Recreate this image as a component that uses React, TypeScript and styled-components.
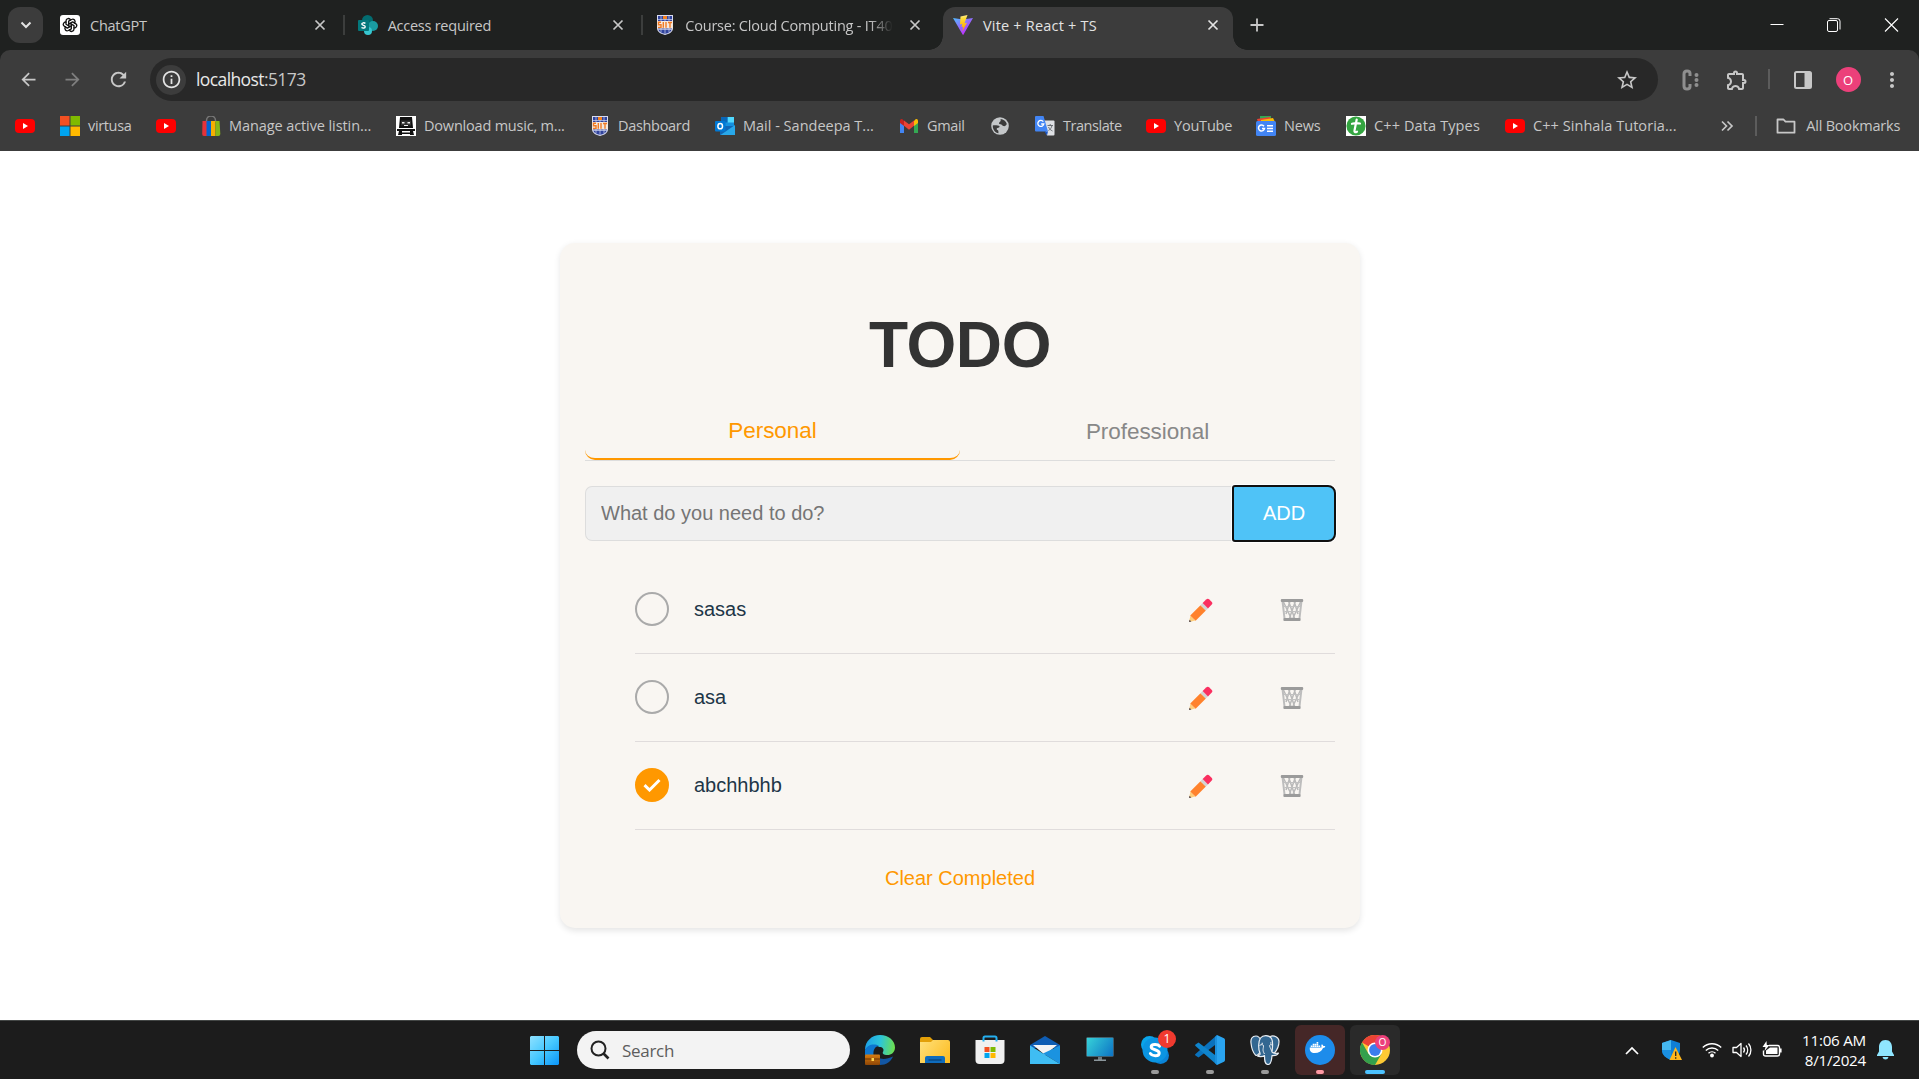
import React from "react";
import styled, { createGlobalStyle, css } from "styled-components";
import { MdArrowBack, MdArrowForward, MdRefresh, MdStarOutline, MdOutlineExtension, MdMoreVert, MdInfoOutline } from "react-icons/md";
import { TbBrandOpenai } from "react-icons/tb";
import { FaDocker } from "react-icons/fa";

const GlobalStyle = createGlobalStyle`
  *, *::before, *::after { box-sizing: border-box; }
  body { margin: 0; background: #fff; }
  svg { display: block; flex: none; }
  button, input { font: inherit; margin: 0; }
`;

const uiFont = css`font-family: "Open Sans", "Noto Sans", sans-serif;`;

/* ---------- window ---------- */

const Window = styled.div`
  width: 1919px;
  height: 1079px;
  display: flex;
  flex-direction: column;
  overflow: hidden;
`;

const Chrome = styled.header`
  ${uiFont}
  flex: none;
  background: #1f2120;
  color: #c7c7c7;
`;

const TabStrip = styled.div`
  height: 50px;
  display: flex;
  padding: 7px 0 0 8px;
`;

const TabSearch = styled.button`
  width: 35px;
  height: 36px;
  margin-right: 7px;
  padding: 0;
  border: 0;
  border-radius: 12px;
  background: #3c3c3c;
  display: grid;
  place-items: center;
`;

const TabItem = styled.div<{ $active?: boolean }>`
  position: relative;
  flex: 0 0 290px;
  height: 43px;
  margin-right: 7.67px;
  padding: 0 14px 7px 10px;
  display: flex;
  align-items: center;
  gap: 10px;
  border-radius: 12px 12px 0 0;
  color: ${(p) => (p.$active ? "#e3e3e3" : "#c7c7c7")};
  background: ${(p) => (p.$active ? "#3c3c3c" : "transparent")};
  ${(p) =>
    p.$active &&
    css`
      &::before,
      &::after {
        content: "";
        position: absolute;
        bottom: 0;
        width: 14px;
        height: 14px;
      }
      &::before {
        left: -14px;
        background: radial-gradient(circle at 0 0, transparent 13.5px, #3c3c3c 14px);
      }
      &::after {
        right: -14px;
        background: radial-gradient(circle at 100% 0, transparent 13.5px, #3c3c3c 14px);
      }
    `}
`;

const TabDivider = styled.i`
  position: absolute;
  right: -5px;
  top: 8px;
  width: 2px;
  height: 20px;
  background: #3c3e3d;
`;

const TabTitle = styled.span<{ $ls: number; $fade?: boolean }>`
  width: 210px;
  font-size: 14.5px;
  letter-spacing: ${(p) => p.$ls}px;
  white-space: nowrap;
  ${(p) => p.$fade && css`mask-image: linear-gradient(90deg, #000 88%, transparent 99%);`}
`;

const TabClose = styled.span`
  margin-left: auto;
  width: 12px;
`;

const NewTab = styled.div`
  width: 33px;
  height: 36px;
  display: grid;
  place-items: center;
`;

const WindowControls = styled.div`
  margin-left: auto;
  height: 36px;
  display: flex;
  align-items: center;
  > svg { width: 57px; }
`;

const Toolbar = styled.div`
  height: 51px;
  padding: 8px 0 0 15px;
  display: flex;
  align-items: flex-start;
  background: #3c3c3c;
  border-radius: 10px 10px 0 0;
`;

const NavButton = styled.div<{ $w: number; $dim?: boolean }>`
  flex: 0 0 ${(p) => p.$w}px;
  height: 43px;
  display: flex;
  align-items: center;
  justify-content: center;
  color: ${(p) => (p.$dim ? "#7f7f7f" : "#c7c7c7")};
`;

const Omnibox = styled.div`
  flex: 0 0 1508px;
  height: 43px;
  padding: 0 19px 0 6px;
  display: flex;
  align-items: center;
  border-radius: 22px;
  background: #282828;
  font-size: 17.5px;
  color: #c7c7c7;
  > svg { margin-left: auto; }
`;

const SiteInfo = styled.span`
  width: 30px;
  height: 30px;
  margin-right: 10px;
  border-radius: 50%;
  background: #3c3c3c;
  color: #e3e3e3;
  display: grid;
  place-items: center;
`;

const Url = styled.span`
  letter-spacing: -0.6px;
  padding-bottom: 1px;
  b { font-weight: 400; color: #e8e8e8; }
`;

const Rule = styled.i<{ $m: string }>`
  flex: none;
  width: 2px;
  height: 20px;
  margin: ${(p) => p.$m};
  background: #5c5c5c;
`;

const Avatar = styled.span`
  width: 25px;
  height: 25px;
  border-radius: 50%;
  background: #ec407a;
  color: #fff;
  font-size: 13px;
  display: grid;
  place-items: center;
`;

const BookmarkBar = styled.nav`
  height: 50px;
  padding-left: 15px;
  display: flex;
  align-items: center;
  background: #3c3c3c;
`;

const Bookmark = styled.a<{ $w: number; $ls?: number }>`
  flex: 0 0 ${(p) => p.$w}px;
  display: flex;
  align-items: center;
  gap: 8px;
  font-size: 14.5px;
  letter-spacing: ${(p) => p.$ls ?? -0.2}px;
  white-space: nowrap;
`;

const BookmarkLabel = styled.span`padding-bottom: 2px;`;

/* ---------- page ---------- */

const Page = styled.main`
  height: 869px;
  flex: none;
  background: #fff;
  display: flex;
  justify-content: center;
  align-items: flex-start;
  padding: 92px 0 0 1px;
  font-family: "Liberation Sans", Arial, sans-serif;
  font-size: 20px;
  color: #213547;
`;

const Card = styled.section`
  width: 800px;
  height: 685px;
  padding: 66px 25px 0;
  border-radius: 15px;
  background: #f9f6f2;
  box-shadow: 0 2.5px 6px rgba(0, 0, 0, 0.1);
`;

const Title = styled.h1`
  margin: 0;
  font-size: 64px;
  line-height: 72px;
  letter-spacing: -0.4px;
  text-align: center;
  color: #333;
`;

const Tabs = styled.div`
  height: 60px;
  margin-top: 20px;
  display: flex;
  align-items: stretch;
  border-bottom: 1px solid #ddd;
`;

const CategoryTab = styled.button<{ $active?: boolean }>`
  flex: 1;
  padding: ${(p) => (p.$active ? 2 : 3)}px 0 0;
  border: 0;
  border-bottom: ${(p) => (p.$active ? "2px solid #ff9800" : "0")};
  border-radius: 10px;
  background: transparent;
  font-size: 22.5px;
  letter-spacing: -0.05px;
  color: ${(p) => (p.$active ? "#ff9800" : "#888")};
`;

const AddForm = styled.div`
  display: flex;
  margin-top: 25px;
`;

const TaskInput = styled.input`
  flex: 1;
  min-width: 0;
  height: 55px;
  padding: 0 15px;
  border: 1px solid #ddd;
  border-right: 0;
  border-radius: 7px 0 0 7px;
  background: #f0f0f0;
  outline: 0;
  &::placeholder { color: #757575; opacity: 1; }
`;

const AddButton = styled.button`
  width: 104px;
  height: 57px;
  margin: -1px -1px -1px 0;
  padding: 0;
  border: 2px solid #101010;
  border-radius: 3px 8px 8px 3px;
  background: #4fc3f7;
  box-shadow: 0 0 0 1px #fff;
  color: #fff;
`;

const TaskList = styled.ul`
  list-style: none;
  margin: 25px 0 0;
  padding: 0 0 0 50px;
`;

const TaskRow = styled.li`
  height: 88px;
  padding: 0 31px 1px 0;
  display: flex;
  align-items: center;
  border-bottom: 1px solid #e0dcdc;
`;

const Check = styled.span<{ $done: boolean }>`
  width: 34px;
  height: 34px;
  margin-right: 25px;
  border: 2px solid ${(p) => (p.$done ? "#ff9800" : "#aaa")};
  border-radius: 50%;
  background: ${(p) => (p.$done ? "#ff9800" : "transparent")};
  display: grid;
  place-items: center;
`;

const TaskName = styled.span`flex: 1;`;

const Actions = styled.span`
  display: flex;
  gap: 67px;
  padding-top: 4px;
`;

const ClearButton = styled.button`
  display: block;
  margin: 36px auto 0;
  padding: 0;
  border: 0;
  background: none;
  line-height: 24px;
  color: #ff9800;
`;

/* ---------- taskbar ---------- */

const Taskbar = styled.footer`
  ${uiFont}
  flex: 1;
  display: flex;
  align-items: center;
  padding-left: 519px;
  border-top: 1px solid #434645;
  background: #1c1c1c;
`;

const AppSlot = styled.span<{ $tint?: string }>`
  position: relative;
  width: 50px;
  height: 50px;
  margin-right: 5px;
  border-radius: 6px;
  background: ${(p) => p.$tint ?? "transparent"};
  display: grid;
  place-items: center;
`;

const Indicator = styled.i<{ $w: number; $c: string }>`
  position: absolute;
  bottom: 1px;
  left: calc(50% - ${(p) => p.$w / 2}px);
  width: ${(p) => p.$w}px;
  height: 4px;
  border-radius: 2px;
  background: ${(p) => p.$c};
`;

const Badge = styled.i<{ $s: number; $c: string; $top: number; $right: number }>`
  position: absolute;
  top: ${(p) => p.$top}px;
  right: ${(p) => p.$right}px;
  width: ${(p) => p.$s}px;
  height: ${(p) => p.$s}px;
  border-radius: 50%;
  background: ${(p) => p.$c};
  color: #fff;
  font-style: normal;
  font-size: ${(p) => p.$s * 0.68}px;
  line-height: 1;
  display: grid;
  place-items: center;
`;

const SearchBox = styled.div`
  width: 273px;
  height: 38px;
  margin: 0 5px 0 3px;
  padding-left: 13px;
  display: flex;
  align-items: center;
  gap: 12px;
  border-radius: 19px;
  background: #f3f3f3;
  font-size: 17px;
  letter-spacing: -0.3px;
  color: #5d5d5d;
`;

const Tray = styled.div`
  margin: 0 25px 0 auto;
  display: flex;
  align-items: center;
`;

const TrayIcon = styled.span<{ $w: number }>`
  width: ${(p) => p.$w}px;
  display: grid;
  place-items: center;
`;

const Clock = styled.div`
  width: 74px;
  margin-right: 11px;
  font-size: 15.2px;
  line-height: 20px;
  letter-spacing: -0.25px;
  text-align: right;
  color: #fff;
`;

/* ---------- icons ---------- */

type G = { children: React.ReactNode; w?: number; h?: number; box?: string };
const Svg = ({ children, w = 20, h = 20, box = "0 0 20 20" }: G) => (
  <svg width={w} height={h} viewBox={box} fill="none">{children}</svg>
);

const Cross = () => (
  <Svg w={12} h={12} box="0 0 12 12"><path d="M1.5 1.5l9 9m0-9l-9 9" stroke="currentColor" strokeWidth="1.7" /></Svg>
);

const YouTube = () => (
  <Svg><rect y="3" width="20" height="14" rx="4" fill="#f00" /><path d="M8 7l5 3-5 3z" fill="#fff" /></Svg>
);

const OpenAI = () => (
  <Svg>
    <rect width="20" height="20" rx="3" fill="#fff" />
    <g color="#111"><TbBrandOpenai x="2" y="2" width="16" height="16" /></g>
  </Svg>
);

const SharePoint = () => (
  <Svg>
    <circle cx="9.5" cy="5.5" r="5.5" fill="#036c70" />
    <circle cx="15" cy="11" r="5" fill="#1a9ba1" />
    <circle cx="10" cy="16" r="4" fill="#37c6d0" />
    <rect y="5" width="11" height="11" rx="1" fill="#03787c" />
    <path d="M7.4 8.3C6.2 7.5 3.8 7.6 3.8 9.1s3.4 1 3.4 2.6-2.4 1.7-3.7.8" stroke="#fff" strokeWidth="1.4" />
  </Svg>
);

const Crest = () => (
  <Svg>
    <path d="M2 0h16v13c0 4-4 6-8 7-4-1-8-3-8-7z" fill="#d9dcf0" />
    <path d="M3 1h14v12c0 3.500-3.500 5-7 6-3.500-1-7-2.500-7-6z" fill="#30439c" />
    <path d="M3 4.500h14M3 14.500h14M6 1v16M10 1v18M14 1v16" stroke="#cfd5ef" strokeWidth=".7" />
    <rect x="2" y="6" width="16" height="7.500" fill="#f4e9df" />
    <path d="M6 7.200H3.500v2.500H6V12.400H3M8.300 7v5.700M11 7v5.700M13 7.500h4M15 7.500v5.200" stroke="#f07a22" strokeWidth="1.400" />
    <rect x="8" y="1" width="4" height="3" fill="#f5821f" />
  </Svg>
);

const Vite = () => (
  <Svg>
    <defs>
      <linearGradient id="viteA" x1="0" y1="0" x2="12" y2="18" gradientUnits="userSpaceOnUse"><stop stopColor="#41d1ff" /><stop offset="1" stopColor="#bd34fe" /></linearGradient>
      <linearGradient id="viteB" x1="9" y1="1" x2="11" y2="14" gradientUnits="userSpaceOnUse"><stop stopColor="#ffea83" /><stop offset=".2" stopColor="#ffdd35" /><stop offset="1" stopColor="#ffa800" /></linearGradient>
    </defs>
    <path d="M20 2.900L10.500 19.600a.5.5 0 01-.9 0L0 2.900l10 1.700z" fill="url(#viteA)" />
    <path d="M14.500 0L7.500 1.400 7 9.500l2.200-.4-.6 3 1.600-.4-.9 4.800 4.700-8.700-2.500.5z" fill="url(#viteB)" />
  </Svg>
);

const MsTiles = () => (
  <Svg><path d="M0 0h9.500v9.500H0z" fill="#f25022" /><path d="M10.500 0H20v9.500h-9.500z" fill="#7fba00" /><path d="M0 10.500h9.500V20H0z" fill="#00a4ef" /><path d="M10.500 10.500H20V20h-9.500z" fill="#ffb900" /></Svg>
);

const Bag = () => (
  <Svg>
    <path d="M5.500 6V4.500a4.500 4.500 0 019 0V6" stroke="#777" strokeWidth="1.500" />
    <path d="M1.500 5H6v15H3q-2 0-1.800-2z" fill="#e53238" /><path d="M5.500 5H10v15H5.500z" fill="#0064d2" />
    <path d="M10 5h4.500v15H10z" fill="#f5af02" /><path d="M14.500 5h4l.8 13q0 2-2 2h-2.800z" fill="#86b817" />
  </Svg>
);

const Robot = () => (
  <Svg>
    <path d="M0 0h20v20H0z" fill="#fff" />
    <path d="M4 1h12l1 11H3z" fill="#111" /><path d="M5 4.500h10v5H5z" fill="#333" />
    <path d="M6 6h2.500v1.500H6zM11.500 6H14v1.500h-2.500zM8 9h4v1H8z" fill="#eee" />
    <path d="M1 13h18v2H1zM3 15h3v4H2zM14 15h3l1 4h-4zM6 16.500h8V18H6z" fill="#111" />
  </Svg>
);

const Outlook = () => (
  <Svg>
    <path d="M6 1h13v11H6z" fill="#1490df" /><path d="M12.500 1H19v5.500h-6.500z" fill="#50d9ff" /><path d="M6 1h6.500v5.500H6z" fill="#0a67b7" />
    <path d="M5 10l15-0v9H5z" fill="#1066b5" /><path d="M20 9v10H5.500z" fill="#28a8ea" />
    <rect y="5" width="10.500" height="10.500" rx="1" fill="#0078d4" /><ellipse cx="5.200" cy="10.200" rx="2.300" ry="2.600" stroke="#fff" strokeWidth="1.500" />
  </Svg>
);

const Gmail = () => (
  <Svg>
    <path d="M1 5v12h4V9z" fill="#4285f4" /><path d="M19 5v12h-4V9z" fill="#34a853" />
    <path d="M15 5v5l4-3V5q0-2.500-2.500-1.700z" fill="#fbbc04" /><path d="M5 5v5L1 7V5q0-2.500 2.500-1.700z" fill="#c5221f" />
    <path d="M5 4.500l5 3.800 5-3.800v5.300l-5 3.900-5-3.900z" fill="#ea4335" />
  </Svg>
);

const Globe = () => (
  <Svg>
    <circle cx="10" cy="10" r="8.800" fill="#c4c7c9" />
    <path d="M2.800 9.500c1.500-.5 3.200 0 5 0 2 0 2.200 1.300 1.200 2-.8.600-2.300.2-2.300 1.500 0 1.200 1.500.8 1.700 2 .1.800-.2 1.400.1 2.200C5.300 16.800 2.500 13.500 2.800 9.500zM10.500 3c3 .2 5.500 2 6.300 5-.5 1.500-2 2.500-3.500 2-1.500-.4-1.200-1.700-2.800-1.800-1.700-.2-2-1.500-.8-2.300 1-.6 1.300-1.400.8-2.900z" fill="#3c3c3c" />
  </Svg>
);

const Translate = () => (
  <Svg>
    <path d="M7 4.500h11.500q1 0 1 1v13q0 1-1 1H12z" fill="#dfe1e5" />
    <path d="M1 0h7.500l4.500 15.500H1q-1 0-1-1V1q0-1 1-1z" fill="#4285f4" /><path d="M9.500 15.500h3.500L12 19.500z" fill="#1a55c4" />
    <path d="M8.300 5.700A3 3 0 108.800 8H6.200" stroke="#fff" strokeWidth="1.300" />
    <path d="M12.500 9.500H18M15.200 8v1.500M17 9.500c-.5 2.500-2 4-3.500 5M13.500 11c1 2 2 3 4 4" stroke="#6b7075" strokeWidth="1" />
  </Svg>
);

const News = () => (
  <Svg>
    <path d="M4 0h11v6H4z" fill="#34a853" /><path d="M1 3l13-2 2 5H2z" fill="#ea4335" /><path d="M5 4l12-2 2 4H5z" fill="#fbbc04" />
    <rect y="5" width="20" height="15" rx="1.500" fill="#4285f4" />
    <path d="M8 10.300A3 3 0 108.500 12.500H6M11 9.800h6M11 12.500h6M11 15.200h6" stroke="#fff" strokeWidth="1.500" />
  </Svg>
);

const Tutorials = () => (
  <Svg>
    <path d="M0 0h20v20H0z" fill="#fff" /><ellipse cx="10" cy="10" rx="9.600" ry="9.400" fill="#34a541" />
    <path d="M10.700 3.500L8.500 14.500q-.5 2.500 2.500 1.200M6 7.800q4-1 8-.3" stroke="#fff" strokeWidth="2.200" strokeLinecap="round" />
  </Svg>
);

const Folder = () => (
  <Svg><path d="M1.500 3.500h6l2 2.200h9v11h-17z" stroke="#c7c7c7" strokeWidth="1.800" strokeLinejoin="round" /></Svg>
);

const Pencil = () => (
  <Svg w={26} h={26} box="0 0 26 26">
    <g transform="rotate(-45 13 13)">
      <path d="M-2.500 13L3 9.500v7z" fill="#ffce7c" /><path d="M-2.500 13l2-1.300v2.600z" fill="#433b4b" />
      <path d="M3 9.200h14.500v7.600H3z" fill="#ff822d" /><path d="M17.500 9.200h3v7.600h-3z" fill="#d3d3d3" />
      <path d="M20.500 9.200h5q2.300 0 2.300 2.200v3.200q0 2.200-2.300 2.200h-5z" fill="#fa2f60" />
    </g>
  </Svg>
);

const Trash = () => (
  <Svg w={24} h={24} box="0 0 24 24">
    <path d="M2.500 3l2.200 19h14.600L21.500 3" stroke="#bdbdbd" strokeWidth="2" />
    <path d="M3 3l8 17M8.500 3l6 17M14 3l4 13M21 3l-8 17M15.500 3l-6 17M10 3L6 16" stroke="#b8b8b8" strokeWidth="1.500" />
    <path d="M4 8.500h16M4.500 13.500h15" stroke="#c0c0c0" strokeWidth="1.200" />
    <rect x=".8" y="1" width="22.400" height="3" rx="1" fill="#9b9b9b" /><rect x="3.500" y="20" width="17" height="3" rx="1" fill="#9b9b9b" />
  </Svg>
);

const Start = () => (
  <Svg w={29} h={29} box="0 0 29 29">
    <defs><linearGradient id="start" x1="0" y1="0" x2="29" y2="29" gradientUnits="userSpaceOnUse"><stop stopColor="#8fe1ff" /><stop offset=".5" stopColor="#46c8ff" /><stop offset="1" stopColor="#0a94f8" /></linearGradient></defs>
    <path d="M1 0h13v14H0V1zM15 0h13l1 1v13H15zM0 15h14v14H1l-1-1zM15 15h14v13l-1 1H15z" fill="url(#start)" />
  </Svg>
);

const Edge = () => (
  <Svg w={30} h={30} box="0 0 30 30">
    <defs>
      <linearGradient id="edgeA" x1="0" y1="8" x2="30" y2="12" gradientUnits="userSpaceOnUse"><stop stopColor="#1ca0e8" /><stop offset=".5" stopColor="#2dc5d8" /><stop offset="1" stopColor="#6fe04a" /></linearGradient>
      <linearGradient id="edgeB" x1="0" y1="20" x2="0" y2="30" gradientUnits="userSpaceOnUse"><stop stopColor="#d47a10" /><stop offset="1" stopColor="#8e4606" /></linearGradient>
    </defs>
    <path d="M0 15C0 6 7 0 15 0c9 0 15 6 15 12.500 0 5-4 7.500-7.500 7.500-4 0-5.500-1.500-4.500-3 1.500-3-.5-5-3.500-5C8 9 3 11 0 15z" fill="url(#edgeA)" />
    <path d="M0 15c2-5 9-7 14-4-4 0-6 4-5.500 9H0z" fill="#0d76cf" />
    <path d="M10 18c1 6 9 8 18 3.500-2 5-7 8.500-13 8.500z" fill="#1256a3" />
    <rect y="19.500" width="15" height="10.500" rx="1" fill="url(#edgeB)" /><path d="M0 24h15" stroke="#6d3503" /><rect x="6.500" y="23" width="2.500" height="3" fill="#ffd34a" />
  </Svg>
);

const Explorer = () => (
  <Svg w={30} h={30} box="0 0 30 30">
    <defs><linearGradient id="exp" x1="0" y1="6" x2="30" y2="28" gradientUnits="userSpaceOnUse"><stop stopColor="#ffe07a" /><stop offset="1" stopColor="#fdbb1e" /></linearGradient></defs>
    <path d="M0 4q0-2 2-2h8l3 3v5H0z" fill="#e3a008" /><path d="M0 7h11l2-2h15q2 0 2 2v21H0z" fill="url(#exp)" />
    <path d="M5 28v-5q0-2 2-2h16q2 0 2 2v5z" fill="#0f6cbd" /><path d="M8.500 25h13" stroke="#0a4a86" strokeWidth="1.500" />
  </Svg>
);

const Store = () => (
  <Svg w={30} h={30} box="0 0 30 30">
    <path d="M.5 5h29v20q0 4-4 4h-21q-4 0-4-4z" fill="#f0f0f0" />
    <path d="M8.500 6.500V3q0-1.500 1.500-1.500h10Q21.500 1.500 21.500 3v3.500" stroke="#25b0f0" strokeWidth="2" />
    <path d="M9.500 12h5v5h-5z" fill="#f25022" /><path d="M15.500 12h5v5h-5z" fill="#7fba00" /><path d="M9.500 18h5v5h-5z" fill="#00a4ef" /><path d="M15.500 18h5v5h-5z" fill="#ffb900" />
  </Svg>
);

const Mail = () => (
  <Svg w={30} h={30} box="0 0 30 30">
    <path d="M0 10L15 1l15 9v3H0z" fill="#0f5db3" /><path d="M3 10h24L15 20z" fill="#f4f4f4" />
    <path d="M30 10.500V29L13 18.500z" fill="#1b93e0" /><path d="M0 10.500L30 29H0z" fill="#3fbdf3" />
  </Svg>
);

const Monitor = () => (
  <Svg w={28} h={26} box="0 0 28 26">
    <defs><linearGradient id="mon" x1="0" y1="0" x2="28" y2="20" gradientUnits="userSpaceOnUse"><stop stopColor="#38d6d9" /><stop offset="1" stopColor="#0b6fc4" /></linearGradient></defs>
    <rect x=".5" y=".5" width="27" height="19" rx="1" fill="url(#mon)" stroke="#52616a" strokeWidth=".7" /><path d="M12 20h4v3h-4z" fill="#6e7a80" /><path d="M8 22.500h12V24H8z" fill="#8b969b" />
  </Svg>
);

const Skype = () => (
  <Svg w={30} h={30} box="0 0 30 30">
    <circle cx="9.500" cy="9.500" r="8.500" fill="#0aa5ea" /><circle cx="20.500" cy="20.500" r="8.500" fill="#0a84d8" /><circle cx="15" cy="15" r="12.500" fill="#0b95e2" />
    <path d="M19.500 11.200C18 9 11.200 8.700 11.200 12s8 2.200 8 5.900-6.800 3.400-8.800.6" stroke="#fff" strokeWidth="3" strokeLinecap="round" />
  </Svg>
);

const VSCode = () => (
  <Svg w={30} h={30} box="0 0 30 30">
    <path d="M22 0v8.500L3.500 22.500 0.500 20.500q-.8-.8 0-1.500z" fill="#0a72bd" />
    <path d="M22 30v-8.500L3.500 7.500.5 9.500q-.8.800 0 1.500z" fill="#0f84cc" />
    <path d="M22 0l7 3.300q1 .5 1 1.700v20q0 1.200-1 1.700L22 30z" fill="#2aa4f0" /><path d="M22 0L20 2v26l2 2z" fill="#1b90dd" />
  </Svg>
);

const Postgres = () => (
  <Svg w={30} h={30} box="0 0 30 30">
    <g fill="#336791" stroke="#e8edf2" strokeWidth="1.200" strokeLinejoin="round">
      <path d="M6 1C2 1 .5 4 1 8c.5 5 2.500 10 4.500 12 1.500 1.300 2.800-.5 4.500-2.500l1-12C9.500 2 8 1 6 1z" />
      <path d="M20 1.500c4-1.500 9 .5 9 5 0 4-2 8.500-4.500 11.500l-5-1z" />
      <path d="M10.500 3C13-.2 19-.2 21.500 3.500c2 3.500 1 9 .5 13.500 1 1.500 4 1.500 6.500 1-1 2-4 2.700-6.500 2.500-.3 4-.5 9-4 9-3.500 0-3.500-4.500-3.500-9-2 1.500-5.500 1.500-7 .5 2.500-.8 3-1.500 2.300-3.500C8 13.500 8.500 6 10.500 3z" />
    </g>
    <path d="M9.500 10.500c2-1.500 4-1 4 .5 0 2.500-1.500 4 1 8M22 10c-1.500-.8-2.500-.3-2.300 1 .2 2 2 3.500 1.800 5.500M11.500 8.300h1.500M20 8h1.500" stroke="#e8edf2" strokeWidth="1" />
  </Svg>
);

const Docker = () => (
  <Svg w={30} h={30} box="0 0 30 30"><circle cx="15" cy="15" r="15" fill="#1d8ceb" /><g color="#fff"><FaDocker x="4.500" y="4.500" width="23" height="20" /></g></Svg>
);

const ChromeLogo = () => (
  <Svg w={30} h={30} box="0 0 30 30">
    <circle cx="15" cy="15" r="15" fill="#fcc934" />
    <path d="M15 15L2 7.500A15 15 0 0128 7.500z" fill="#ea4335" /><path d="M15 7.500h13" stroke="#ea4335" />
    <path d="M2 7.500L8.500 18.700 15 15l6.500 3.700L15 30A15 15 0 012 7.500z" fill="#34a04c" />
    <circle cx="15" cy="15" r="7.500" fill="#fff" /><circle cx="15" cy="15" r="5.900" fill="#3b7ded" />
  </Svg>
);

const Shield = () => (
  <Svg w={20} h={21} box="0 0 20 21">
    <path d="M9 0l9 3v7c0 5-4 8-9 10-5-2-9-5-9-10V3z" fill="#0f7fd6" /><path d="M9 0v10H0V3z" fill="#45b8f0" /><path d="M9 10v10c-5-2-9-5-9-10z" fill="#1a8fe0" />
    <path d="M13.500 7L20 20H7.500z" fill="#ffb61a" /><path d="M13.700 11.500v4.500M13.700 17.200v1.500" stroke="#222" strokeWidth="1.300" />
  </Svg>
);

const Wifi = () => (
  <Svg w={20} h={18} box="0 0 20 18">
    <path d="M.8 6.500a13 13 0 0118.400 0M3.800 9.500a8.800 8.800 0 0112.400 0M6.500 12.300a5 5 0 017 0" stroke="#fff" strokeWidth="1.400" /><circle cx="10" cy="14.500" r="1.900" fill="#fff" />
  </Svg>
);

const Speaker = () => (
  <Svg w={20} h={18} box="0 0 20 18">
    <path d="M1 6.500h3.500L9 2.500v13L4.500 11.500H1z" stroke="#fff" strokeWidth="1.300" strokeLinejoin="round" /><path d="M11.500 6.500a4 4 0 010 5M14 4.500a7 7 0 010 9M16.500 2.500a10 10 0 010 13" stroke="#fff" strokeWidth="1.300" />
  </Svg>
);

const Battery = () => (
  <Svg w={20} h={18} box="0 0 20 18">
    <path d="M7 4.500h8.500q2 0 2 2v6.500q0 2-2 2h-12q-2 0-2-2V9.500" stroke="#fff" strokeWidth="1.400" /><path d="M18.800 7.500v4" stroke="#fff" strokeWidth="1.600" />
    <path d="M8 6.500h7.500V13H4v-3.500z" fill="#fff" /><path d="M4.500 0L.5 6h3L2.500 10l5-6H4.800z" fill="#fff" />
  </Svg>
);

const Bell = () => (
  <Svg w={17} h={20} box="0 0 17 20">
    <path d="M8.500 0C4 0 2 3.500 2 7v4.500L0 15v1h17v-1l-2-3.500V7c0-3.500-2-7-6.500-7z" fill="#8fe6ff" /><path d="M5.500 17h6q-.6 2.500-3 2.500t-3-2.500z" fill="#8fe6ff" />
  </Svg>
);

/* ---------- data ---------- */

const browserTabs = [
  { title: "ChatGPT", icon: <OpenAI />, ls: -0.25, divider: true },
  { title: "Access required", icon: <SharePoint />, ls: -0.25, divider: true },
  { title: "Course: Cloud Computing - IT40", icon: <Crest />, ls: -0.22, fade: true },
  { title: "Vite + React + TS", icon: <Vite />, ls: 0.2, active: true },
];

const bookmarks = [
  { icon: <YouTube />, w: 45 },
  { icon: <MsTiles />, label: "virtusa", w: 96, ls: -0.35 },
  { icon: <YouTube />, w: 45 },
  { icon: <Bag />, label: "Manage active listin...", w: 195, ls: -0.09 },
  { icon: <Robot />, label: "Download music, m...", w: 194 },
  { icon: <Crest />, label: "Dashboard", w: 125, ls: -0.32 },
  { icon: <Outlook />, label: "Mail - Sandeepa T...", w: 184, ls: 0 },
  { icon: <Gmail />, label: "Gmail", w: 91, ls: -0.35 },
  { icon: <Globe />, w: 45 },
  { icon: <Translate />, label: "Translate", w: 111, ls: -0.45 },
  { icon: <YouTube />, label: "YouTube", w: 110 },
  { icon: <News />, label: "News", w: 90 },
  { icon: <Tutorials />, label: "C++ Data Types", w: 159, ls: 0.12 },
  { icon: <YouTube />, label: "C++ Sinhala Tutoria...", w: 215, ls: 0.06 },
];

const tasks = [
  { name: "sasas", done: false },
  { name: "asa", done: false },
  { name: "abchhbhb", done: true },
];

export default function App() {
  return (
    <Window>
      <GlobalStyle />
      <Chrome>
        <TabStrip>
          <TabSearch>
            <Svg w={12} h={8} box="0 0 12 8"><path d="M1.500 1.500L6 6l4.500-4.500" stroke="#e3e3e3" strokeWidth="2" /></Svg>
          </TabSearch>
          {browserTabs.map((t) => (
            <TabItem key={t.title} $active={t.active}>
              {t.icon}
              <TabTitle $ls={t.ls} $fade={t.fade}>{t.title}</TabTitle>
              <TabClose><Cross /></TabClose>
              {t.divider && <TabDivider />}
            </TabItem>
          ))}
          <NewTab><Svg w={14} h={14} box="0 0 14 14"><path d="M7 .5v13M.5 7h13" stroke="#c7c7c7" strokeWidth="1.800" /></Svg></NewTab>
          <WindowControls>
            <Svg w={57} h={14} box="0 0 57 14"><path d="M22.500 6.500h13" stroke="#fff" /></Svg>
            <Svg w={57} h={14} box="0 0 57 14"><rect x="22.500" y="2.500" width="10" height="11" rx="1.500" stroke="#fff" /><path d="M24.500 .7h8q2.500 0 2.500 2.500v8.300" stroke="#fff" /></Svg>
            <Svg w={57} h={14} box="0 0 57 14"><path d="M23 .5l13 13M36 .5l-13 13" stroke="#fff" strokeWidth="1.100" /></Svg>
          </WindowControls>
        </TabStrip>

        <Toolbar>
          <NavButton $w={26}><MdArrowBack size={21} /></NavButton>
          <NavButton $w={62} $dim><MdArrowForward size={21} /></NavButton>
          <NavButton $w={30}><MdRefresh size={23} /></NavButton>
          <NavButton $w={17} />
          <Omnibox>
            <SiteInfo><MdInfoOutline size={21} /></SiteInfo>
            <Url><b>localhost</b>:5173</Url>
            <MdStarOutline size={24} />
          </Omnibox>
          <NavButton $w={66}>
            <Svg w={20} h={22} box="0 0 20 22"><path d="M9 7V4.500Q9 2 6 2T3 5v12q0 3 3 3t3-2.500V15" stroke="#8f8f8f" strokeWidth="3" /><circle cx="15.500" cy="6" r="2" fill="#8f8f8f" /><circle cx="15.500" cy="11" r="2" fill="#8f8f8f" /><circle cx="15.500" cy="16" r="2" fill="#8f8f8f" /></Svg>
          </NavButton>
          <NavButton $w={26}><MdOutlineExtension size={24} /></NavButton>
          <Rule $m="11px 0 0 18px" />
          <NavButton $w={65}>
            <Svg><rect x="2" y="2" width="16" height="16" rx="1.500" stroke="#c7c7c7" strokeWidth="2" /><path d="M11.500 2H18v16h-6.500z" fill="#c7c7c7" /></Svg>
          </NavButton>
          <NavButton $w={26}><Avatar>O</Avatar></NavButton>
          <NavButton $w={62}><MdMoreVert size={24} /></NavButton>
        </Toolbar>

        <BookmarkBar>
          {bookmarks.map((b, i) => (
            <Bookmark key={i} $w={b.w} $ls={b.ls}>
              {b.icon}
              {b.label && <BookmarkLabel>{b.label}</BookmarkLabel>}
            </Bookmark>
          ))}
          <Svg w={14} h={12} box="0 0 14 12"><path d="M2 1.500L6.500 6 2 10.500M7.500 1.500L12 6l-4.500 4.500" stroke="#c7c7c7" strokeWidth="1.700" /></Svg>
          <Rule $m="0 19px 0 21px" />
          <Bookmark $w={130}><Folder /><BookmarkLabel>&thinsp;All Bookmarks</BookmarkLabel></Bookmark>
        </BookmarkBar>
      </Chrome>

      <Page>
        <Card>
          <Title>TODO</Title>
          <Tabs>
            <CategoryTab $active>Personal</CategoryTab>
            <CategoryTab>Professional</CategoryTab>
          </Tabs>
          <AddForm>
            <TaskInput placeholder="What do you need to do?" />
            <AddButton>ADD</AddButton>
          </AddForm>
          <TaskList>
            {tasks.map((t) => (
              <TaskRow key={t.name}>
                <Check $done={t.done}>
                  {t.done && <Svg w={18} h={14} box="0 0 18 14"><path d="M1.500 7.200l5 4.800L16.500 2" stroke="#fff" strokeWidth="3" /></Svg>}
                </Check>
                <TaskName>{t.name}</TaskName>
                <Actions><Pencil /><Trash /></Actions>
              </TaskRow>
            ))}
          </TaskList>
          <ClearButton>Clear Completed</ClearButton>
        </Card>
      </Page>

      <Taskbar>
        <AppSlot><Start /></AppSlot>
        <SearchBox>
          <Svg w={20} h={20}><circle cx="8.500" cy="8.500" r="7" stroke="#222" strokeWidth="2" /><path d="M13.500 13.500L18.500 18.500" stroke="#222" strokeWidth="2.600" /></Svg>
          Search
        </SearchBox>
        <AppSlot><Edge /></AppSlot>
        <AppSlot><Explorer /></AppSlot>
        <AppSlot><Store /></AppSlot>
        <AppSlot><Mail /></AppSlot>
        <AppSlot><Monitor /></AppSlot>
        <AppSlot><Skype /><Badge $s={18} $c="#f03a2f" $top={5} $right={4}>1</Badge><Indicator $w={8} $c="#9a9a9a" /></AppSlot>
        <AppSlot><VSCode /><Indicator $w={8} $c="#9a9a9a" /></AppSlot>
        <AppSlot><Postgres /><Indicator $w={8} $c="#9a9a9a" /></AppSlot>
        <AppSlot $tint="#452727"><Docker /><Indicator $w={8} $c="#ff99a4" /></AppSlot>
        <AppSlot $tint="#2a2a2a"><ChromeLogo /><Badge $s={15} $c="#ec407a" $top={10} $right={10}>O</Badge><Indicator $w={20} $c="#4cc2ff" /></AppSlot>
        <Tray>
          <TrayIcon $w={40}><Svg w={14} h={9} box="0 0 14 9"><path d="M1 8l6-6 6 6" stroke="#fff" strokeWidth="1.700" /></Svg></TrayIcon>
          <TrayIcon $w={40}><Shield /></TrayIcon>
          <TrayIcon $w={40}><Wifi /></TrayIcon>
          <TrayIcon $w={20}><Speaker /></TrayIcon>
          <TrayIcon $w={40}><Battery /></TrayIcon>
          <Clock>11:06 AM<br />8/1/2024</Clock>
          <Bell />
        </Tray>
      </Taskbar>
    </Window>
  );
}
